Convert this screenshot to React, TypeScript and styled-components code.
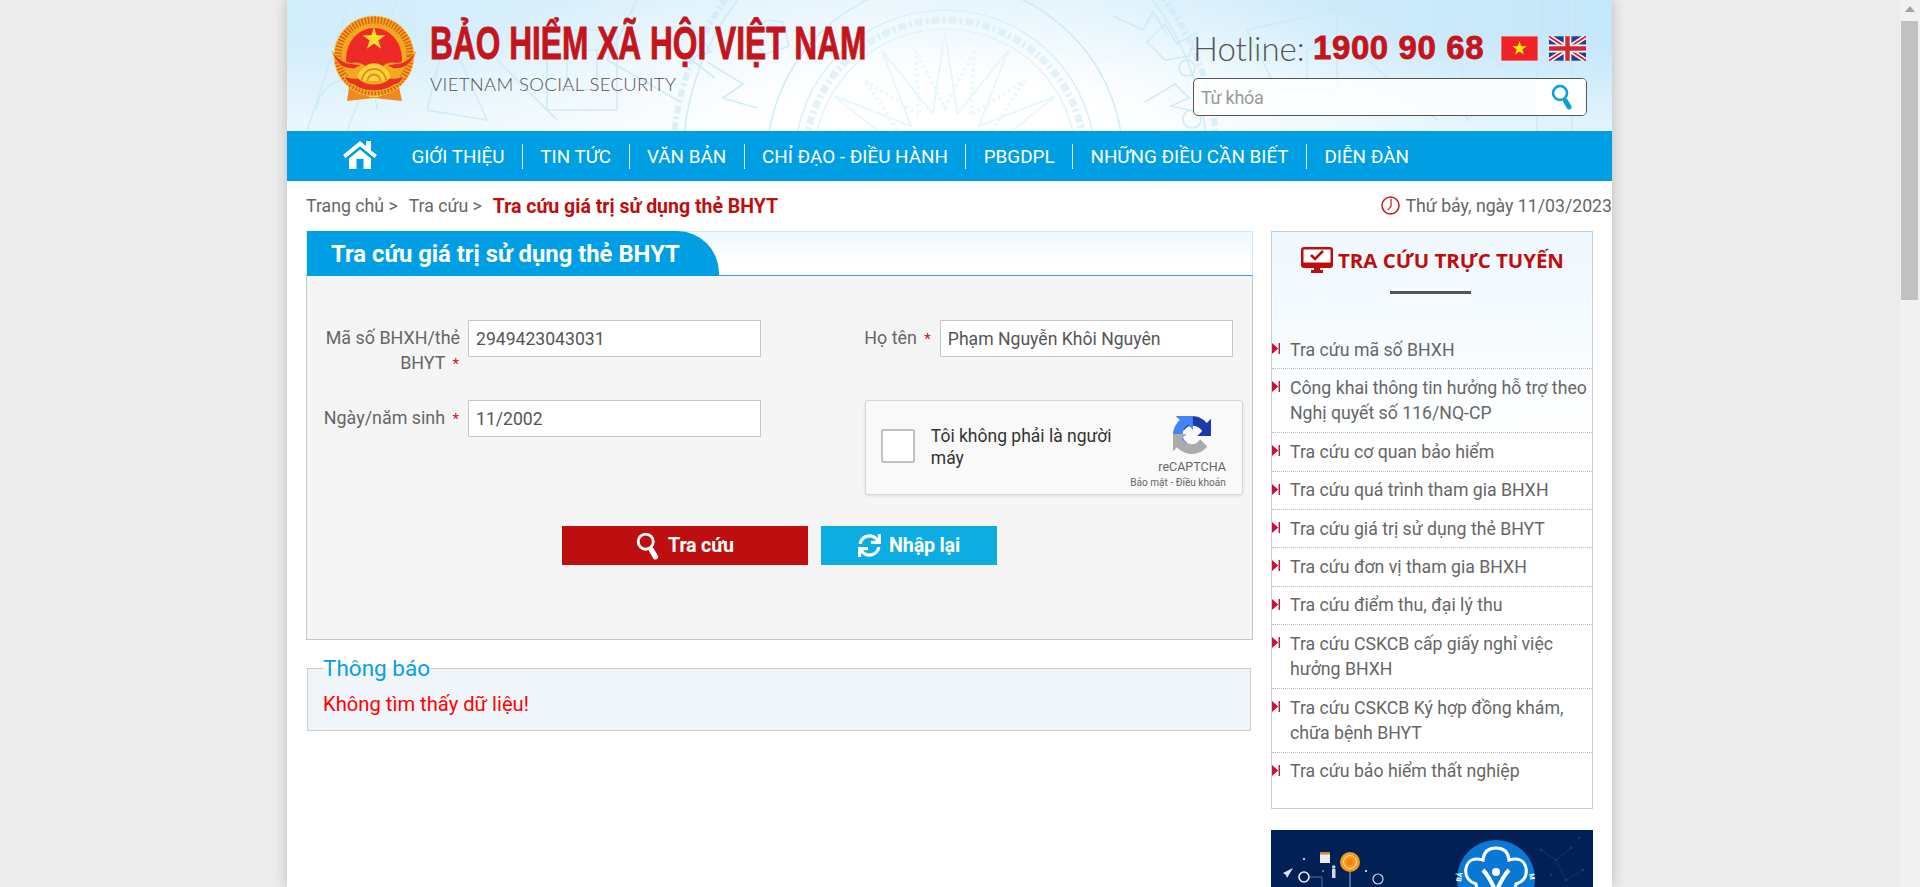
import React from "react";
import styled, { createGlobalStyle } from "styled-components";
import { FaSync } from "react-icons/fa";

const Global = createGlobalStyle`
  html, body { margin: 0; padding: 0; height: 100%; overflow: hidden; background: #ececec; }
  * { box-sizing: border-box; }
  body { font-family: Roboto, "Liberation Sans", sans-serif; color: #666; }
`;

const Screen = styled.div`display: flex; width: 1920px; height: 887px; overflow: hidden;`;
const Viewport = styled.div`flex: 1; height: 887px; overflow: hidden; background: #ececec;`;
const ScrollTrack = styled.div`
  width: 20px; height: 887px; padding: 0 2px 0 1px; background: #f1f1f1; display: flex; flex-direction: column; align-items: center;
`;
const ScrollArrow = styled.div`
  width: 0; height: 0; margin: 6px 0 9px; border-left: 5px solid transparent; border-right: 5px solid transparent; border-bottom: 6px solid #a3a3a3;
`;
const ScrollThumb = styled.div`width: 17px; height: 279px; background: #c1c1c1;`;

const Wrapper = styled.div`
  width: 1325px; height: 887px; margin-left: 287px; background: #fff; box-shadow: 0 0 12px rgba(0,0,0,.22); overflow: hidden;
`;

const Header = styled.header`
  position: relative; height: 131px; display: flex; justify-content: space-between; padding: 0 25px 0 44px; overflow: hidden;
  background: radial-gradient(ellipse 560px 175px at 650px 130px, #ffffff 28%, rgba(255,255,255,0) 100%),
    linear-gradient(180deg, rgba(255,255,255,0) 30%, rgba(255,255,255,.55) 100%),
    linear-gradient(90deg, #d2edfb 0%, #def2fc 45%, #c4e7fa 100%);
`;
const Drum = styled.svg`position: absolute; left: 0; top: 0; width: 1325px; height: 131px; pointer-events: none;`;
const Brand = styled.div`position: relative; display: flex; align-items: flex-start; padding-top: 15px;`;
const BrandText = styled.div`margin-left: 11px; padding-top: 3px;`;
const Title = styled.div`
  width: 437px; height: 50px; white-space: nowrap; font-family: "Liberation Sans", Arial, sans-serif; font-weight: 700; font-size: 47px; line-height: 50px; color: #c4141c;
  transform: scaleX(.674); transform-origin: left center; -webkit-text-stroke: .9px #c4141c;
`;
const Subtitle = styled.div`
  margin-top: 5px; font-family: Lato, "Open Sans", sans-serif; font-weight: 300; font-size: 18.5px; line-height: 22px; color: #555; letter-spacing: .35px; white-space: nowrap;
`;
const HeaderRight = styled.div`position: relative; width: 394px; padding-top: 29px;`;
const HotlineRow = styled.div`display: flex; align-items: center; height: 38px;`;
const HotlineLabel = styled.span`font-family: Lato, sans-serif; font-weight: 300; font-size: 33px; line-height: 38px; color: #555; width: 120px; white-space: nowrap;`;
const HotlineNumber = styled.span`
  font-family: "Liberation Sans", sans-serif; font-weight: 700; font-size: 33px; line-height: 38px; color: #c4141c; -webkit-text-stroke: .8px #c4141c; width: 188px; letter-spacing: .6px; white-space: nowrap;
`;
const Flag = styled.svg`display: block; width: 37px; height: 25px; margin-right: 11px; &:last-child { margin-right: 0; }`;
const SearchBox = styled.div`
  margin-top: 11px; height: 38px; display: flex; border: 1px solid #555; border-radius: 5px; overflow: hidden; background: rgba(255,255,255,.82);
`;
const SearchInput = styled.input`
  flex: 1; min-width: 0; border: 0; outline: 0; background: transparent; padding: 0 7px; font: 400 18px Roboto, sans-serif; letter-spacing: -.3px;
  &::placeholder { color: #9a9a9a; opacity: 1; }
`;
const SearchBtn = styled.div`width: 50px; background: #fff; display: flex; align-items: center; justify-content: center; padding-left: 3px;`;

const Nav = styled.nav`display: flex; align-items: center; height: 50px; background: #009fe3; padding-left: 56px;`;
const HomeIcon = styled.svg`display: block; width: 34px; height: 29px; margin: -3px 17px 0 0;`;
const NavItem = styled.a<{ $first?: boolean }>`
  display: flex; align-items: center; height: 25px; padding: 0 17.4px; color: #fff; font-size: 18.88px; white-space: nowrap;
  border-left: ${(p) => (p.$first ? "0" : "1px solid #e6f6fd")};
`;

const Crumbs = styled.div`display: flex; justify-content: space-between; align-items: center; height: 50px; padding-left: 19px;`;
const CrumbTrail = styled.div`display: flex; align-items: center; font-size: 17.7px; color: #666; white-space: nowrap;`;
const Crumb = styled.span`margin-right: 11px;`;
const CrumbActive = styled.span`font-weight: 700; color: #bf0d0d; font-size: 19.5px;`;
const DateText = styled.div`display: flex; align-items: center; gap: 6px; font-size: 17.7px; color: #666; white-space: nowrap;`;
const ClockIcon = styled.svg`display: block; width: 19px; height: 19px; margin-top: -2px;`;

const Main = styled.main`display: flex; align-items: flex-start; padding: 0 19px; gap: 18px;`;
const LeftCol = styled.div`width: 947px;`;

const Panel = styled.section`height: 409px; border: 1px solid #c8c8c8; border-top: 0; background: #f5f5f5; display: flex; flex-direction: column;`;
const PanelHead = styled.div`
  height: 45px; margin: 0 -1px; padding-left: 1px; background: linear-gradient(180deg, #eef8fd 0%, #ffffff 70%); border: 1px solid #cfe9f7; border-bottom: 1px solid #2a9fd8;
  display: flex; flex: none;
`;
const Tab = styled.h2`
  margin: -1px 0 -1px -1px; width: 412px; height: 45px; padding-left: 24px; background: #009fe3; color: #fff; border-radius: 0 42px 0 0;
  font-size: 23.85px; font-weight: 700; line-height: 47px; white-space: nowrap;
`;
const FormArea = styled.div`display: flex; padding-top: 44px; height: 250px; flex: none;`;
const FormCol = styled.div<{ $w: number }>`width: ${(p) => p.$w}px; display: flex; flex-direction: column;`;
const Row = styled.div<{ $h: number }>`display: flex; align-items: flex-start; height: ${(p) => p.$h}px;`;
const Label = styled.label<{ $w: number }>`
  width: ${(p) => p.$w}px; margin-right: 8px; padding-top: 5px; text-align: right; font-size: 17.9px; line-height: 25px; color: #666; white-space: pre-line;
`;
const Req = styled.span`color: #c8141c; margin-left: 3px; margin-right: 1px; font-size: 15px;`;
const Field = styled.input`
  width: 293px; height: 37px; padding: 0 7px; border: 1px solid #c8c8c8; background: #fff; outline: 0; font: 400 17.6px Roboto, sans-serif; color: #555;
`;
const Captcha = styled.div`
  width: 378px; height: 95px; margin-left: 3px; display: flex; align-items: flex-start; padding: 28px 16px 0 15px; position: relative;
  background: #f9f9f9; border: 1px solid #d6d6d6; border-radius: 3px; box-shadow: 0 1px 3px rgba(0,0,0,.1);
`;
const CheckBox = styled.div`width: 34px; height: 34px; flex: none; background: #fff; border: 2px solid #c1c1c1; border-radius: 2px;`;
const CaptchaText = styled.div`width: 195px; margin: -3px 0 0 16px; font-size: 17.5px; line-height: 21.5px; color: #333;`;
const CaptchaBrand = styled.div`margin: -13px 0 0 auto; display: flex; flex-direction: column; align-items: flex-end; width: 100px;`;
const CaptchaLogo = styled.svg`display: block; width: 38px; height: 38px; margin-right: 15px;`;
const CaptchaName = styled.div`font-size: 12.5px; line-height: 14px; margin-top: 6px; color: #666;`;
const CaptchaTerms = styled.div`font-size: 10.1px; line-height: 12px; margin-top: 3px; color: #666; white-space: nowrap;`;

const Actions = styled.div`display: flex; justify-content: center; gap: 13px;`;
const ActionBtn = styled.button<{ $bg: string; $w: number }>`
  width: ${(p) => p.$w}px; height: 39px; border: 0; padding: 0; display: flex; align-items: center; justify-content: center; gap: 8px;
  background: ${(p) => p.$bg}; color: #fff; font: 700 19.7px Roboto, sans-serif; letter-spacing: -.2px;
`;

const Notice = styled.fieldset`margin: 15px 2px 0 1px; padding: 0 15px; height: 76px; border: 1px solid #ccc; background: #f0f5fa;`;
const NoticeLegend = styled.legend`padding: 0; font-size: 22.5px; line-height: 26px; color: #099fdf;`;
const NoticeText = styled.div`margin-top: 10px; font-size: 20.2px; line-height: 26px; color: #f00;`;

const Side = styled.aside`width: 322px;`;
const SideBox = styled.div`
  height: 578px; border: 1px solid #ccc; background: linear-gradient(180deg, #eff8fe 0%, #ffffff 37%);
`;
const SideHead = styled.div`display: flex; align-items: center; justify-content: center; gap: 5px; padding-top: 11px; height: 45px; margin-right: -1px;`;
const SideTitle = styled.h3`margin: 0; font-family: "Open Sans", sans-serif; font-weight: 700; font-size: 20.4px; line-height: 26px; color: #bf0d0d; white-space: nowrap;`;
const SideRule = styled.div`width: 81px; height: 3px; background: #555; margin: 14px auto 37px; position: relative; left: -2px;`;
const SideList = styled.ul`margin: 0; padding: 0; list-style: none;`;
const SideItem = styled.li`
  position: relative; padding: 6.7px 0 5.3px 18px; font-size: 17.72px; line-height: 25.4px; color: #666; border-bottom: 1px dotted #bbb;
  &:last-child { border-bottom: 0; }
`;
const Arrow = styled.svg`position: absolute; left: 0; top: 12px; width: 8px; height: 11px;`;
const Banner = styled.svg`display: block; width: 322px; height: 200px; margin-top: 21px;`;

const links = [
  "Tra cứu mã số BHXH",
  "Công khai thông tin hưởng hỗ trợ theo Nghị quyết số 116/NQ-CP",
  "Tra cứu cơ quan bảo hiểm",
  "Tra cứu quá trình tham gia BHXH",
  "Tra cứu giá trị sử dụng thẻ BHYT",
  "Tra cứu đơn vị tham gia BHXH",
  "Tra cứu điểm thu, đại lý thu",
  "Tra cứu CSKCB cấp giấy nghỉ việc hưởng BHXH",
  "Tra cứu CSKCB Ký hợp đồng khám, chữa bệnh BHYT",
  "Tra cứu bảo hiểm thất nghiệp",
];

const nav = ["GIỚI THIỆU", "TIN TỨC", "VĂN BẢN", "CHỈ ĐẠO - ĐIỀU HÀNH", "PBGDPL", "NHỮNG ĐIỀU CẦN BIẾT", "DIỄN ĐÀN"];

const starPts = (cx: number, cy: number, R: number, r: number, n: number, rot = -90) =>
  Array.from({ length: n * 2 }, (_, i) => {
    const a = ((rot + (i * 180) / n) * Math.PI) / 180;
    const d = i % 2 ? r : R;
    return `${(cx + d * Math.cos(a)).toFixed(1)},${(cy + d * Math.sin(a)).toFixed(1)}`;
  }).join(" ");

const DrumArt = () => (
  <Drum viewBox="0 0 1325 131" fill="none" stroke="#dff2fb" strokeWidth="1.5" aria-hidden>
    <polygon points={starPts(658, 160, 127, 48, 12)} stroke="#e8f6fd" strokeWidth="2" />
    <polygon points={starPts(658, 160, 113, 52, 12, -75)} stroke="#edf8fd" strokeWidth="4" strokeDasharray="3 3" />
    <circle cx="658" cy="160" r="131" stroke="#e2f3fc" />
    <circle cx="658" cy="160" r="140" stroke="#d9effa" strokeDasharray="8 3 3 3" strokeWidth="7" opacity=".8" />
    <circle cx="658" cy="160" r="150" stroke="#d9effa" />
    <circle cx="658" cy="160" r="178" stroke="#cfeaf9" />
    <circle cx="658" cy="160" r="262" stroke="#cfeaf9" />
    <circle cx="658" cy="160" r="272" stroke="#cfeaf9" strokeDasharray="8 3 3 3" strokeWidth="6" opacity=".7" />
    <g stroke="#cbe9f8" strokeWidth="1.6" opacity=".85">
      <path d="M860 42l18-18 12 20 20-12-8 24-24 4zM826 16l30 14 10-18 14 22M858 102l30-18 14 14-18 8 26 6M905 110a9 9 0 1 0 .1 0M900 60a8 8 0 1 0 .1 0" />
      <path d="M480 20l-18 16 16 18 24-8-6-24zM420 62l36 22-20 14 34 10M400 20l24 32-22 6 26 20" />
      <path d="M60 10L20 131M110 0L60 131M160 30l40 90-60-10zM210 60l60 60M30 110a30 30 0 0 1 60 0M960 30l90-20v80h-60zM1020 50l30-10v40h-30zM1110 0l-30 60 70 60M1170 20l60 60-50 40zM1250 0v131M1285 0v131" />
      <path d="M260 30h70v80h-70zM280 50h30v40h-30zM350 0l-30 60 70 40" />
    </g>
  </Drum>
);

const Emblem = () => (
  <svg width="88" height="88" viewBox="0 0 88 88" aria-label="Quốc huy">
    <path d="M18 72l-2 14 27-3 28 3-3-14z" fill="#f08a1e" />
    <rect x="38" y="74" width="10" height="8" fill="#fcd63f" />
    <circle cx="43" cy="41" r="40" fill="#f4a81f" stroke="#f9c94a" strokeWidth="1" strokeDasharray="3 1.5" />
    <circle cx="43" cy="41" r="36" fill="none" stroke="#d8601a" strokeWidth="7" strokeDasharray="1.5 1.7" />
    <path d="M15 44a28 31 0 0 1 56 0q0 3-1 5-12-4-18 2-4-3-9-3t-9 3q-6-6-18-2-1-2-1-5z" fill="#ee2a28" />
    <polygon points={starPts(43, 24, 12, 4.6, 5)} fill="#fcdc30" />
    <path d="M1 36q7 10 16 12l14 2-8 4-8-1Q5 50 1 36zM85 36q-7 10-16 12l-14 2 8 4 8-1q10-3 14-17z" fill="#e8301f" stroke="#f6bf2b" strokeWidth=".8" />
    <path d="M26 66a17 17 0 0 1 34 0z" fill="#fcd33a" />
    <path d="M31 66a12 12 0 0 1 24 0M36.5 66a6.5 6.5 0 0 1 13 0" fill="none" stroke="#e08b1c" strokeWidth="1.8" />
    <path d="M13 61q7 3 14 2 6 6 16 6t16-6q7 1 14-2-3 8-10 9l-5 3q-7 3-15 3t-15-3l-5-3q-7-1-10-9z" fill="#e8321f" stroke="#f4b62a" strokeWidth="1" />
  </svg>
);

const Lens = ({ color, size = 26 }: { color: string; size?: number }) => (
  <svg width={size * 0.85} height={size} viewBox="0 0 22 26" fill="none">
    <circle cx="9" cy="9" r="7" stroke={color} strokeWidth="2.6" />
    <path d="M14.5 17l3.5 6" stroke={color} strokeWidth="5" strokeLinecap="round" />
  </svg>
);

export default function App() {
  return (
    <>
      <Global />
      <Screen>
        <Viewport>
          <Wrapper>
            <Header>
              <DrumArt />
              <Brand>
                <Emblem />
                <BrandText>
                  <Title>BẢO HIỂM XÃ HỘI VIỆT NAM</Title>
                  <Subtitle>VIETNAM SOCIAL SECURITY</Subtitle>
                </BrandText>
              </Brand>
              <HeaderRight>
                <HotlineRow>
                  <HotlineLabel>Hotline:</HotlineLabel>
                  <HotlineNumber>1900 90 68</HotlineNumber>
                  <Flag viewBox="0 0 37 25" aria-label="Tiếng Việt">
                    <rect width="37" height="25" fill="#ee2328" stroke="#f2b3b5" />
                    <polygon points={starPts(18.5, 12.5, 7.5, 2.9, 5)} fill="#fff000" />
                  </Flag>
                  <Flag viewBox="0 0 38 25" aria-label="English">
                    <rect width="38" height="25" fill="#2b3a8c" />
                    <path d="M0 0l38 25M38 0L0 25" stroke="#fff" strokeWidth="5" />
                    <path d="M0 0l38 25M38 0L0 25" stroke="#d22630" strokeWidth="1.8" />
                    <path d="M19 0v25M0 12.5h38" stroke="#fff" strokeWidth="8" />
                    <path d="M19 0v25M0 12.5h38" stroke="#d22630" strokeWidth="4.5" />
                  </Flag>
                </HotlineRow>
                <SearchBox>
                  <SearchInput placeholder="Từ khóa" />
                  <SearchBtn>
                    <Lens color="#0a9fdc" size={26} />
                  </SearchBtn>
                </SearchBox>
              </HeaderRight>
            </Header>

            <Nav>
              <HomeIcon viewBox="0 0 34 29" aria-label="Trang chủ">
                <path fill="#fff" d="M0 15L17 1l6 5V1h5v9.5L34 15l-2.5 3L17 6.3 2.5 18zM6 18.5L17 9.5l11 9V29h-7.5V19h-7v10H6z" />
              </HomeIcon>
              {nav.map((n, i) => (
                <NavItem key={n} $first={i === 0}>{n}</NavItem>
              ))}
            </Nav>

            <Crumbs>
              <CrumbTrail>
                <Crumb>Trang chủ &gt;</Crumb>
                <Crumb>Tra cứu &gt;</Crumb>
                <CrumbActive>Tra cứu giá trị sử dụng thẻ BHYT</CrumbActive>
              </CrumbTrail>
              <DateText>
                <ClockIcon viewBox="0 0 19 19" fill="none" stroke="#c8141c">
                  <circle cx="9.5" cy="9.5" r="8.5" strokeWidth="1.5" />
                  <path d="M10 3v7l-3 4" strokeWidth="1.2" />
                </ClockIcon>
                Thứ bảy, ngày 11/03/2023
              </DateText>
            </Crumbs>

            <Main>
              <LeftCol>
                <Panel>
                  <PanelHead>
                    <Tab>Tra cứu giá trị sử dụng thẻ BHYT</Tab>
                  </PanelHead>
                  <FormArea>
                    <FormCol $w={556}>
                      <Row $h={80}>
                        <Label $w={153}>Mã số BHXH/thẻ BHYT <Req>*</Req></Label>
                        <Field defaultValue="2949423043031" />
                      </Row>
                      <Row $h={80}>
                        <Label $w={153}>Ngày/năm sinh <Req>*</Req></Label>
                        <Field defaultValue="11/2002" />
                      </Row>
                    </FormCol>
                    <FormCol $w={391}>
                      <Row $h={80}>
                        <Label $w={70}>Họ tên <Req>*</Req></Label>
                        <Field defaultValue="Phạm Nguyễn Khôi Nguyên" />
                      </Row>
                      <Captcha>
                        <CheckBox />
                        <CaptchaText>Tôi không phải là người máy</CaptchaText>
                        <CaptchaBrand>
                          <CaptchaLogo viewBox="0 0 64 64">
                            <path fill="#1C3AA9" d="M64 31.955l-.033-1.37V4.687l-7.16 7.16C50.948 4.674 42.033.093 32.05.093c-10.4 0-19.622 4.96-25.458 12.64l11.736 11.86c1.15-2.127 2.784-3.955 4.75-5.32 2.05-1.6 4.953-2.91 9.972-2.91.606 0 1.074.07 1.418.203 6.22.49 11.61 3.922 14.784 8.904l-8.307 8.308c10.523-.04 22.4-.066 23.025 0" />
                            <path fill="#4285F4" d="M31.862.001l-1.37.033H4.594l7.16 7.16C4.58 13.05 0 21.965 0 31.947c0 10.4 4.96 19.623 12.64 25.458L24.5 45.67c-2.127-1.15-3.955-2.784-5.32-4.75-1.6-2.05-2.91-4.953-2.91-9.973 0-.606.07-1.074.203-1.418.49-6.22 3.922-11.61 8.904-14.784l8.308 8.308C33.645 12.53 33.62.653 33.686.03" />
                            <path fill="#ABABAB" d="M.001 31.955l.033 1.37v25.9l7.16-7.16c5.86 7.173 14.775 11.754 24.757 11.754 10.4 0 19.623-4.96 25.458-12.64l-11.736-11.86c-1.15 2.127-2.784 3.955-4.75 5.32-2.05 1.6-4.953 2.91-9.973 2.91-.606 0-1.074-.07-1.418-.203-6.22-.49-11.61-3.922-14.784-8.904l8.308-8.308c-10.523.04-22.4.066-23.025 0" />
                          </CaptchaLogo>
                          <CaptchaName>reCAPTCHA</CaptchaName>
                          <CaptchaTerms>Bảo mật - Điều khoản</CaptchaTerms>
                        </CaptchaBrand>
                      </Captcha>
                    </FormCol>
                  </FormArea>
                  <Actions>
                    <ActionBtn $bg="#bd0f0f" $w={246}>
                      <Lens color="#fff" size={28} />
                      Tra cứu
                    </ActionBtn>
                    <ActionBtn $bg="#0dace3" $w={176}>
                      <FaSync size={23} />
                      Nhập lại
                    </ActionBtn>
                  </Actions>
                </Panel>
                <Notice>
                  <NoticeLegend>Thông báo</NoticeLegend>
                  <NoticeText>Không tìm thấy dữ liệu!</NoticeText>
                </Notice>
              </LeftCol>

              <Side>
                <SideBox>
                  <SideHead>
                    <svg width="32" height="26" viewBox="0 0 32 26">
                      <path fill="#bf0d0d" d="M3 0h26a3 3 0 0 1 3 3v15a3 3 0 0 1-3 3H19v2h3v3H10v-3h3v-2H3a3 3 0 0 1-3-3V3a3 3 0 0 1 3-3z" />
                      <rect x="2.5" y="2.5" width="27" height="13" fill="#fff" />
                      <path d="M10 8l4 4 8-8" fill="none" stroke="#bf0d0d" strokeWidth="2.6" />
                    </svg>
                    <SideTitle>TRA CỨU TRỰC TUYẾN</SideTitle>
                  </SideHead>
                  <SideRule />
                  <SideList>
                    {links.map((l) => (
                      <SideItem key={l}>
                        <Arrow viewBox="0 0 8 11"><path fill="#c8103a" d="M0 0l6.2 5.5L0 11zM6.6 0H8v11H6.6z" /></Arrow>
                        {l}
                      </SideItem>
                    ))}
                  </SideList>
                </SideBox>
                <Banner viewBox="0 0 322 200" aria-label="Banner">
                  <rect width="322" height="200" fill="#012055" />
                  <g fill="#1450a8" opacity=".7">
                    {[[270,20],[285,30],[300,18],[312,40],[280,45],[295,50],[262,48],[308,8]].map(([x,y]) => <circle key={`${x}-${y}`} cx={x} cy={y} r="1.2" />)}
                  </g>
                  <path d="M270 20l15 10 15-12M285 30l10 20 17-10" stroke="#12428c" fill="none" strokeWidth=".6" />
                  <circle cx="225" cy="49" r="39" fill="#0878d4" />
                  <path d="M225 18q12 0 13 12 14-4 17 8 2 12-10 16-2 14-20 14t-20-14q-12-4-10-16 3-12 17-8 1-12 13-12z" fill="none" stroke="#fff" strokeWidth="3" />
                  <circle cx="225" cy="42" r="4" fill="#fff" />
                  <path d="M212 40q6 6 13 22 7-16 13-22" fill="none" stroke="#fff" strokeWidth="4" />
                  <text x="190" y="52" fontSize="7" fontWeight="700" fill="#fff" fontFamily="Roboto" transform="rotate(-80 190 52)">BẢ</text>
                  <text x="258" y="44" fontSize="7" fontWeight="700" fill="#fff" fontFamily="Roboto" transform="rotate(80 258 44)">M</text>
                  <polygon points="12,43 22,38 16,48 15,45" fill="#dfe8f2" />
                  <circle cx="33" cy="47" r="5" fill="none" stroke="#e8eef5" strokeWidth="1.6" />
                  <path d="M38 47h13v20" fill="none" stroke="#7f93b5" strokeWidth=".7" />
                  <circle cx="33" cy="29" r="1" fill="#fff" />
                  <rect x="49" y="24" width="10" height="9" fill="#e8eef5" />
                  <rect x="49" y="22" width="10" height="2.5" fill="#d48a22" />
                  <circle cx="79" cy="32" r="10" fill="#f39a1f" />
                  <circle cx="79" cy="32" r="6.5" fill="none" stroke="#fde2b4" strokeWidth="1" />
                  <circle cx="79" cy="32" r="3" fill="#ef7d10" />
                  <path d="M79 42v18" stroke="#cbd6e6" strokeWidth=".8" />
                  <rect x="61" y="39" width="3.5" height="9" fill="#cfd9e6" />
                  <circle cx="62.7" cy="37" r="1.8" fill="#cfd9e6" />
                  <circle cx="107" cy="49" r="5" fill="none" stroke="#cfd9e6" strokeWidth="1.2" />
                  <circle cx="52" cy="41" r="1" fill="#d48a22" />
                  <circle cx="95" cy="41" r="1" fill="#fff" />
                </Banner>
              </Side>
            </Main>
          </Wrapper>
        </Viewport>
        <ScrollTrack>
          <ScrollArrow />
          <ScrollThumb />
        </ScrollTrack>
      </Screen>
    </>
  );
}
